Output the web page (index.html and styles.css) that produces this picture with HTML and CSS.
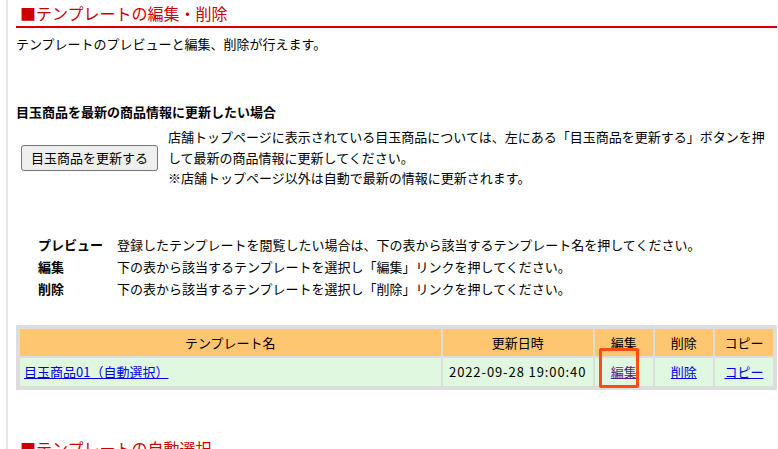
FILE: index.html
```html
<!DOCTYPE html>
<html lang="ja">
<head>
    <meta charset="UTF-8">
    <title>テンプレートの編集・削除</title>
    <link rel="stylesheet" href="styles.css">
</head>
<body>
    <div class="main">
        <h2 class="section-title">■テンプレートの編集・削除</h2>
        <p class="lead">テンプレートのプレビューと編集、削除が行えます。</p>

        <h3 class="sub-title">目玉商品を最新の商品情報に更新したい場合</h3>
        <div class="update-box">
            <button class="update-button">目玉商品を更新する</button>
            <p class="update-text">店舗トップページに表示されている目玉商品については、左にある「目玉商品を更新する」ボタンを押して最新の商品情報に更新してください。<br>※店舗トップページ以外は自動で最新の情報に更新されます。</p>
        </div>

        <dl class="help-list">
            <dt>プレビュー</dt>
            <dd>登録したテンプレートを閲覧したい場合は、下の表から該当するテンプレート名を押してください。</dd>
            <dt>編集</dt>
            <dd>下の表から該当するテンプレートを選択し「編集」リンクを押してください。</dd>
            <dt>削除</dt>
            <dd>下の表から該当するテンプレートを選択し「削除」リンクを押してください。</dd>
        </dl>

        <table class="template-table">
            <tr>
                <th class="col-name">テンプレート名</th>
                <th class="col-date">更新日時</th>
                <th class="col-act">編集</th>
                <th class="col-act">削除</th>
                <th class="col-act">コピー</th>
            </tr>
            <tr>
                <td class="cell-name"><a href="#">目玉商品01（自動選択）</a></td>
                <td class="cell-center cell-date">2022-09-28 19:00:40</td>
                <td class="cell-center cell-mark"><a href="#" class="visited">編集</a><span class="highlight"></span></td>
                <td class="cell-center"><a href="#">削除</a></td>
                <td class="cell-center"><a href="#">コピー</a></td>
            </tr>
        </table>

        <h2 class="section-title next">■テンプレートの自動選択</h2>
    </div>
</body>
</html>
```

FILE: styles.css
```css
body {
    margin: 0;
    font-family: "Noto Sans CJK JP", "Noto Sans", sans-serif;
    font-size: 13px;
    color: #000000;
    background-color: #ffffff;
}
.main {
    margin-left: 6px;
    border-left: 2px solid #e6e6e6;
    padding: 0 1px 0 8px;
    min-height: 449px;
    box-sizing: border-box;
}
.section-title {
    margin: 0;
    padding: 3px 0 2px 4px;
    font-size: 16px;
    font-weight: normal;
    line-height: 21px;
    color: #cc0000;
    border-bottom: 2px solid #d40000;
}
.section-title.next {
    margin-top: 45px;
}
.lead {
    margin: 6px 0 0;
    line-height: 20px;
}
.sub-title {
    margin: 48px 0 0;
    font-size: 13px;
    font-weight: bold;
    line-height: 20px;
}
.update-box {
    display: flex;
    align-items: center;
    gap: 10px;
    margin-top: 5px;
}
.update-button {
    flex: none;
    margin-left: 5px;
    width: 137px;
    height: 26px;
    padding: 0;
    font-family: inherit;
    font-size: 13px;
    color: #000000;
    background-color: #efefef;
    border: 1px solid #767676;
    border-radius: 3px;
}
.update-text {
    margin: 0;
    line-height: 20.5px;
}
.help-list {
    display: grid;
    grid-template-columns: 79px 1fr;
    margin: 45px 0 0 22px;
    line-height: 22px;
}
.help-list dt {
    font-weight: bold;
}
.help-list dd {
    margin: 0;
}
.template-table {
    width: 100%;
    margin-top: 25px;
    border: 2px solid #dddddd;
    border-spacing: 2px;
    background-color: #dddddd;
}
.template-table th {
    height: 27px;
    padding: 0 4px;
    font-weight: normal;
    background-color: #fec671;
}
.template-table td {
    height: 28px;
    padding: 0 4px;
    background-color: #e0f8df;
}
.col-name {
    width: 412px;
}
.col-date {
    width: 142px;
}
.col-act {
    width: 50px;
}
.cell-center {
    text-align: center;
}
.cell-date {
    letter-spacing: 0.9px;
}
.template-table a {
    color: #0000ee;
}
.template-table a.visited {
    color: #551a8b;
}
.cell-mark {
    position: relative;
}
.highlight {
    position: absolute;
    top: -10px;
    left: 4px;
    width: 40px;
    height: 40px;
    box-sizing: border-box;
    border: 3px solid #ff4a12;
    border-radius: 2px;
}
```
